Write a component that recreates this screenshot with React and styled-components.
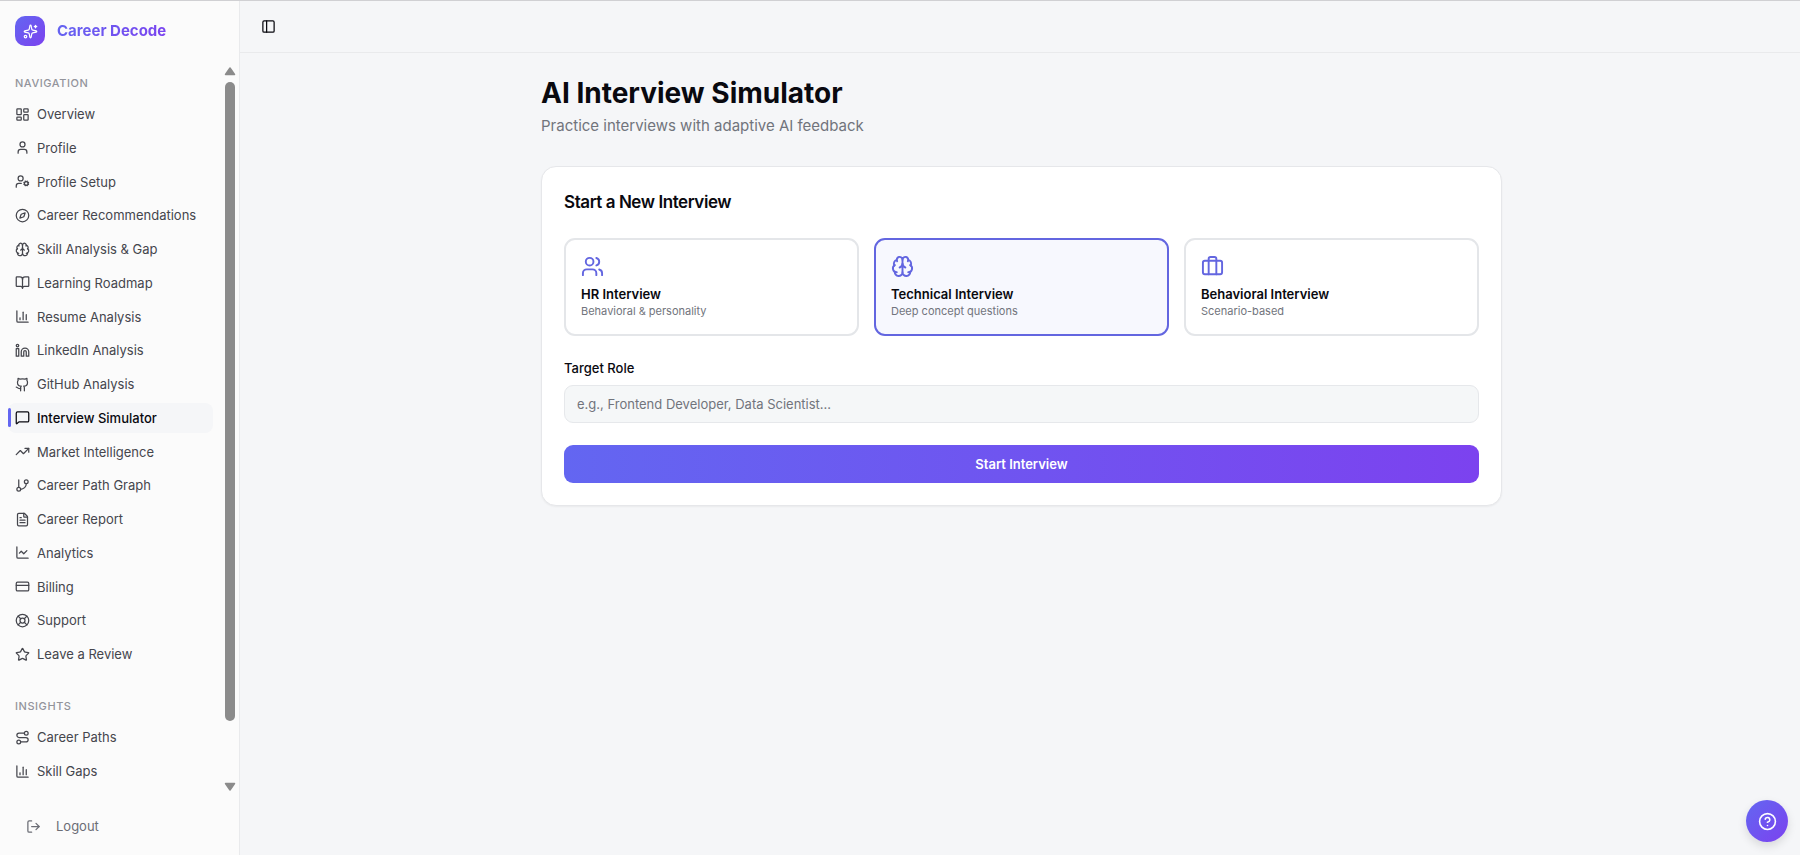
import React, { useState } from "react";
import styled, { createGlobalStyle, css } from "styled-components";
import {
  Sparkles, PanelLeft, LayoutDashboard, User, UserCog, Compass, Brain, BookOpen,
  ChartColumn, Linkedin, Github, MessageSquare, TrendingUp, GitBranch, FileText,
  ChartLine, CreditCard, LifeBuoy, Star, Route, LogOut, Users, Briefcase,
  CircleQuestionMark,
} from "lucide-react";

const GlobalStyle = createGlobalStyle`
  *, *::before, *::after { box-sizing: border-box; }
  body {
    margin: 0;
    background: #f5f6f8;
    color: #09090f;
    font-family: Inter, "Liberation Sans", sans-serif;
    font-size: 14px;
    line-height: 20px;
  }
  button, input { font: inherit; }
  h1, h2, p, ul { margin: 0; padding: 0; }
`;

const accentGradient = "linear-gradient(135deg, #6366f1, #7c42ef)";

const Shell = styled.div`
  display: flex;
  min-height: 100vh;
  border-top: 1px solid #d0d0d3;
`;

const Sidebar = styled.aside`
  display: flex;
  flex-direction: column;
  flex: none;
  width: 240px;
  height: calc(100vh - 1px);
  background: #fbfbfb;
  border-right: 1px solid #e9eaec;
`;

const Brand = styled.a`
  display: flex;
  align-items: center;
  gap: 12px;
  padding: 15px;
  text-decoration: none;
`;

const BrandMark = styled.span`
  display: grid;
  place-items: center;
  width: 30px;
  height: 30px;
  border-radius: 10px;
  color: #fff;
  background: ${accentGradient};
`;

const BrandName = styled.span`
  font-size: 15px;
  font-weight: 700;
  color: transparent;
  background: ${accentGradient};
  background-clip: text;
`;

const ScrollArea = styled.div`
  display: flex;
  flex: 1;
  min-height: 0;
  margin-top: 5px;
`;

const Nav = styled.nav`
  flex: 1;
  overflow: hidden;
  padding: 2px 0 0 8px;
`;

const NavGroup = styled.section`
  padding-bottom: 22px;
`;

const NavHeading = styled.h2`
  height: 31px;
  padding: 0 7px;
  font-size: 11px;
  line-height: 30px;
  font-weight: 500;
  letter-spacing: 0.05em;
  text-transform: uppercase;
  color: #93949b;
`;

const NavList = styled.ul`
  display: flex;
  flex-direction: column;
  justify-content: space-between;
  gap: 3px;
  min-height: ${(p) => (p.$tall ? "570px" : "64px")};
  list-style: none;
`;

const NavLink = styled.a`
  position: relative;
  display: flex;
  align-items: center;
  gap: 7px;
  height: 30px;
  padding: 0 7px;
  border-radius: 8px;
  font-size: 13px;
  color: #45464d;
  text-decoration: none;

  ${(p) =>
    p.$active &&
    css`
      color: #09090f;
      font-weight: 500;
      background: #f5f6f8;

      &::before {
        content: "";
        position: absolute;
        left: 0;
        top: 5px;
        width: 3px;
        height: 19px;
        border-radius: 2px;
        background: #6366f1;
      }
    `}
`;

const Scrollbar = styled.div`
  display: flex;
  flex-direction: column;
  align-items: center;
  flex: none;
  width: 15px;
  margin: 0 2px 0 9px;
  padding-bottom: 3px;
`;

const ScrollTrack = styled.div`
  display: flex;
  flex-direction: column;
  flex: 1;
  margin: 6px 0 5px;
`;

const ScrollThumb = styled.div`
  width: 10px;
  height: 92%;
  border-radius: 5px;
  background: #8b8b8b;
`;

const SidebarFooter = styled.div`
  padding: 12px 7px 10px;
`;

const LogoutButton = styled.button`
  display: flex;
  align-items: center;
  gap: 15px;
  width: 100%;
  height: 38px;
  padding: 0 19px;
  border: 0;
  border-radius: 8px;
  background: none;
  font-size: 13px;
  color: #6b6d75;
  cursor: pointer;
`;

const Page = styled.div`
  flex: 1;
  min-width: 0;
`;

const TopBar = styled.header`
  display: flex;
  align-items: center;
  height: 52px;
  padding: 0 13px;
  border-bottom: 1px solid #e9eaec;
`;

const IconButton = styled.button`
  display: grid;
  place-items: center;
  width: 30px;
  height: 30px;
  padding: 0;
  border: 0;
  border-radius: 8px;
  background: none;
  color: #09090f;
  cursor: pointer;
`;

const Content = styled.main`
  padding: 23px 24px 24px 27px;
`;

const Column = styled.div`
  max-width: 961px;
  margin: 0 auto;
`;

const Title = styled.h1`
  font-size: 28px;
  line-height: 34px;
  font-weight: 700;
`;

const Subtitle = styled.p`
  margin-top: 4px;
  font-size: 15px;
  line-height: 23px;
  color: #71747c;
`;

const Card = styled.form`
  margin-top: 29px;
  padding: 22px;
  border: 1px solid #e6e7ea;
  border-radius: 15px;
  background: #fff;
  box-shadow: 0 1px 2px rgba(0, 0, 0, 0.05);
`;

const CardTitle = styled.h2`
  font-size: 17px;
  line-height: 26px;
  font-weight: 600;
  letter-spacing: -0.025em;
`;

const Options = styled.div`
  display: grid;
  grid-template-columns: repeat(3, 1fr);
  gap: 15px;
  margin-top: 23px;
`;

const OptionButton = styled.button`
  display: flex;
  flex-direction: column;
  align-items: flex-start;
  padding: 15px;
  border: 2px solid ${(p) => (p.$selected ? "#6366e0" : "#e4e6e9")};
  border-radius: 11px;
  background: ${(p) => (p.$selected ? "#f7f8fe" : "#fff")};
  color: inherit;
  text-align: left;
  cursor: pointer;

  svg { color: #6366e0; }
`;

const OptionTitle = styled.span`
  margin-top: 7px;
  font-size: 13px;
  line-height: 19px;
  font-weight: 600;
`;

const OptionNote = styled.span`
  font-size: 11px;
  line-height: 15px;
  color: #71747c;
`;

const FieldLabel = styled.label`
  display: block;
  margin-top: 22px;
  font-size: 13px;
  font-weight: 500;
`;

const TextInput = styled.input`
  display: block;
  width: 100%;
  height: 38px;
  margin-top: 7px;
  padding: 0 12px;
  border: 1px solid #e6e8eb;
  border-radius: 9px;
  background: #f5f7f8;
  font-size: 13px;
  color: #09090f;

  &::placeholder { color: #71747c; opacity: 1; }
`;

const PrimaryButton = styled.button`
  display: block;
  width: 100%;
  height: 38px;
  margin-top: 22px;
  border: 0;
  border-radius: 9px;
  background: linear-gradient(90deg, #6366f1, #7c42ef);
  font-size: 13px;
  font-weight: 600;
  color: #fff;
  cursor: pointer;
`;

const HelpButton = styled.button`
  position: fixed;
  right: 12px;
  bottom: 13px;
  display: grid;
  place-items: center;
  width: 42px;
  height: 42px;
  padding: 0;
  border: 0;
  border-radius: 50%;
  background: ${accentGradient};
  box-shadow: 0 4px 10px rgba(0, 0, 0, 0.12);
  color: #fff;
  cursor: pointer;
`;

const navigation = [
  ["Overview", LayoutDashboard],
  ["Profile", User],
  ["Profile Setup", UserCog],
  ["Career Recommendations", Compass],
  ["Skill Analysis & Gap", Brain],
  ["Learning Roadmap", BookOpen],
  ["Resume Analysis", ChartColumn],
  ["LinkedIn Analysis", Linkedin],
  ["GitHub Analysis", Github],
  ["Interview Simulator", MessageSquare],
  ["Market Intelligence", TrendingUp],
  ["Career Path Graph", GitBranch],
  ["Career Report", FileText],
  ["Analytics", ChartLine],
  ["Billing", CreditCard],
  ["Support", LifeBuoy],
  ["Leave a Review", Star],
];

const insights = [
  ["Career Paths", Route],
  ["Skill Gaps", ChartColumn],
];

const interviewTypes = [
  ["HR Interview", "Behavioral & personality", Users],
  ["Technical Interview", "Deep concept questions", Brain],
  ["Behavioral Interview", "Scenario-based", Briefcase],
];

function NavSection({ title, items, tall }) {
  return (
    <NavGroup>
      <NavHeading>{title}</NavHeading>
      <NavList $tall={tall}>
        {items.map(([label, Icon]) => {
          const active = label === "Interview Simulator";
          return (
            <li key={label}>
              <NavLink href="#" $active={active} aria-current={active ? "page" : undefined}>
                <Icon size={15} />
                {label}
              </NavLink>
            </li>
          );
        })}
      </NavList>
    </NavGroup>
  );
}

function ScrollArrow({ down }) {
  return (
    <svg width="12" height="10" viewBox="0 0 12 10" aria-hidden="true">
      <path
        d={down ? "M1.5 1.5h9L6 8z" : "M1.5 8.5h9L6 2z"}
        fill="#8b8b8b"
        stroke="#8b8b8b"
        strokeWidth="1.5"
        strokeLinejoin="round"
      />
    </svg>
  );
}

export default function App() {
  const [selected, setSelected] = useState("Technical Interview");
  return (
    <>
      <GlobalStyle />
      <Shell>
        <Sidebar>
          <Brand href="#">
            <BrandMark><Sparkles size={15} /></BrandMark>
            <BrandName>Career Decode</BrandName>
          </Brand>
          <ScrollArea>
            <Nav>
              <NavSection title="Navigation" items={navigation} tall />
              <NavSection title="Insights" items={insights} />
            </Nav>
            <Scrollbar>
              <ScrollArrow />
              <ScrollTrack><ScrollThumb /></ScrollTrack>
              <ScrollArrow down />
            </Scrollbar>
          </ScrollArea>
          <SidebarFooter>
            <LogoutButton type="button"><LogOut size={15} />Logout</LogoutButton>
          </SidebarFooter>
        </Sidebar>
        <Page>
          <TopBar>
            <IconButton type="button" aria-label="Toggle sidebar"><PanelLeft size={15} /></IconButton>
          </TopBar>
          <Content>
            <Column>
              <Title>AI Interview Simulator</Title>
              <Subtitle>Practice interviews with adaptive AI feedback</Subtitle>
              <Card onSubmit={(e) => e.preventDefault()}>
                <CardTitle>Start a New Interview</CardTitle>
                <Options>
                  {interviewTypes.map(([name, note, Icon]) => (
                    <OptionButton
                      key={name}
                      type="button"
                      $selected={selected === name}
                      aria-pressed={selected === name}
                      onClick={() => setSelected(name)}
                    >
                      <Icon size={23} />
                      <OptionTitle>{name}</OptionTitle>
                      <OptionNote>{note}</OptionNote>
                    </OptionButton>
                  ))}
                </Options>
                <FieldLabel htmlFor="target-role">Target Role</FieldLabel>
                <TextInput id="target-role" placeholder="e.g., Frontend Developer, Data Scientist..." />
                <PrimaryButton type="submit">Start Interview</PrimaryButton>
              </Card>
            </Column>
          </Content>
        </Page>
        <HelpButton type="button" aria-label="Help"><CircleQuestionMark size={19} /></HelpButton>
      </Shell>
    </>
  );
}
